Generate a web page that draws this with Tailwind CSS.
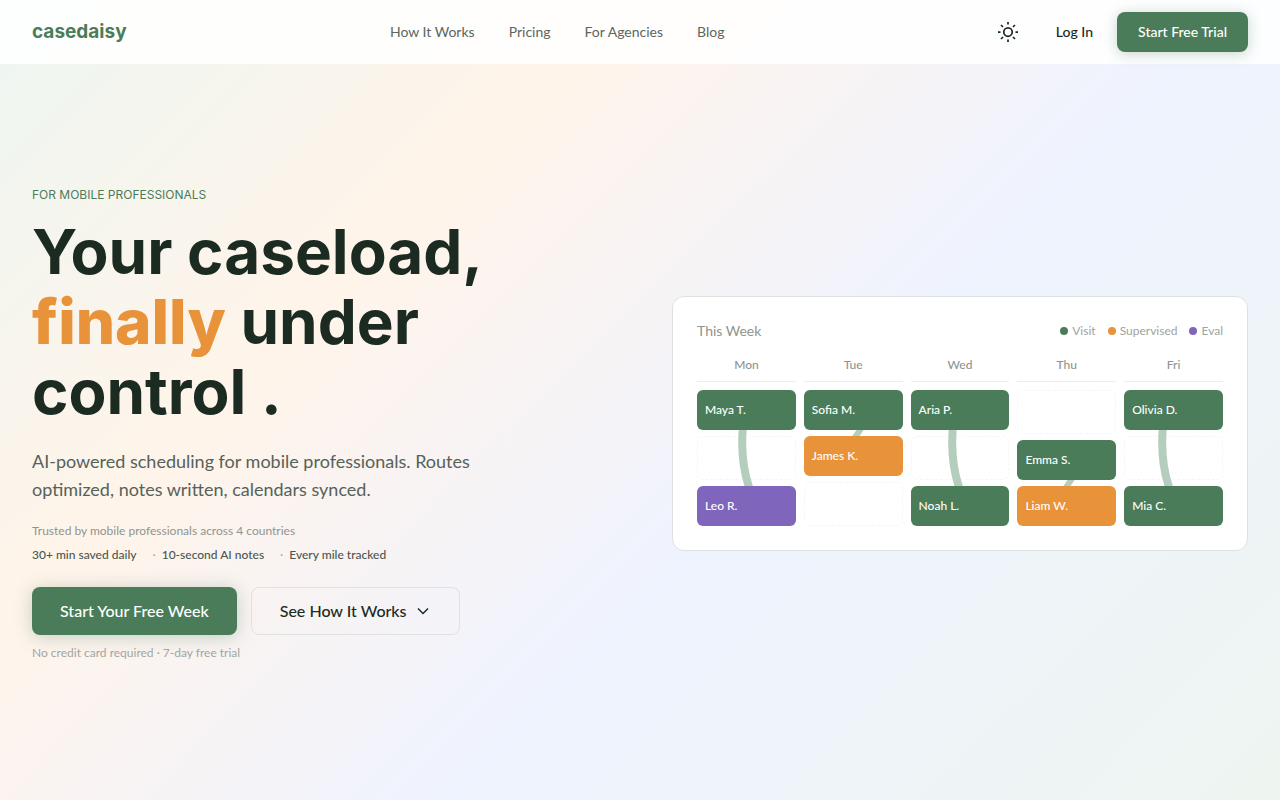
<!DOCTYPE html>
<html lang="en">
<head>
<meta charset="utf-8">
<meta name="viewport" content="width=device-width, initial-scale=1">
<title>casedaisy</title>
<script src="https://cdn.jsdelivr.net/npm/@tailwindcss/browser@4"></script>
</head>
<body class="flex min-h-screen flex-col bg-[linear-gradient(135deg,#edf6f1_0%,#fff4ea_30%,#eff3ff_60%,#eef5f0_100%)] font-['Lato','Inter',sans-serif] text-[#1c2b22]">

<header class="flex h-16 items-center justify-between bg-white/90 px-8">
  <a href="#" class="font-['Inter',sans-serif] text-[19px] font-bold text-[#4a7c59]">casedaisy</a>
  <nav class="flex gap-[34px] text-sm text-[#5a665e]">
    <a href="#how">How It Works</a>
    <a href="#pricing">Pricing</a>
    <a href="#agencies">For Agencies</a>
    <a href="#blog">Blog</a>
  </nav>
  <div class="flex items-center gap-6 text-sm font-medium">
    <button type="button" aria-label="Toggle theme" class="mr-1 flex size-10 items-center justify-center">
      <svg class="size-6" viewBox="0 0 24 24" fill="none" stroke="#1c2b22" stroke-width="1.75"><circle cx="12" cy="12" r="4.25"/><path d="M12 2v2.500M12 19.500v2.500M2 12h2.500M19.500 12h2.500M5 5l2 2M17 17l2 2M5 19l2-2M17 7l2-2"/></svg>
    </button>
    <a href="#login">Log In</a>
    <a href="#trial" class="flex h-10 items-center rounded-lg bg-[#4a7c59] px-[21px] text-white shadow-[0_2px_14px_rgba(74,124,89,0.3)]">Start Free Trial</a>
  </div>
</header>

<main class="grid flex-1 grid-cols-2 items-center gap-16 px-8 pb-[18px]">
  <section>
    <p class="font-['Inter',sans-serif] text-xs leading-5 text-[#4a7c59]">FOR MOBILE PROFESSIONALS</p>
    <h1 class="mt-3 font-['Inter',sans-serif] text-[62px] leading-[70px] font-bold">Your caseload,<br><span class="font-extrabold text-[#e8923a]">finally</span> under<br>control .</h1>
    <p class="mt-5 text-lg leading-7 text-[#566259]">AI-powered scheduling for mobile professionals. Routes<br>optimized, notes written, calendars synced.</p>
    <p class="mt-5 text-xs leading-4 text-[#8f958f]">Trusted by mobile professionals across 4 countries</p>
    <ul class="mt-2 flex gap-4 text-xs leading-4 font-medium text-[#4c574f]">
      <li>30+ min saved daily</li>
      <li><span class="mr-1.5 text-[#a5aaa5]">·</span>10-second AI notes</li>
      <li><span class="mr-1.5 text-[#a5aaa5]">·</span>Every mile tracked</li>
    </ul>
    <div class="mt-6 flex gap-3.5 text-base font-medium">
      <a href="#start" class="flex h-12 items-center rounded-lg bg-[#4a7c59] px-7 text-white shadow-[0_2px_18px_rgba(74,124,89,0.3)]">Start Your Free Week</a>
      <a href="#how" class="flex h-12 items-center gap-2 rounded-lg border border-[#dfe3e0] px-7">See How It Works
        <svg class="size-4" viewBox="0 0 16 16" fill="none" stroke="currentColor" stroke-width="1.5"><path d="m3 5.500 5 5 5-5"/></svg>
      </a>
    </div>
    <p class="mt-2.5 text-xs leading-4 text-[#a0a6a1]">No credit card required · 7-day free trial</p>
  </section>

  <section class="rounded-xl border border-[#dde2df] bg-white p-6">
    <div class="flex items-center justify-between leading-5">
      <h2 class="text-sm text-[#8f958f]">This Week</h2>
      <ul class="flex gap-3 text-xs text-[#9ea39e]">
        <li class="flex items-center gap-1"><span class="size-2 rounded-full bg-[#4a7c59]"></span>Visit</li>
        <li class="flex items-center gap-1"><span class="size-2 rounded-full bg-[#e8923a]"></span>Supervised</li>
        <li class="flex items-center gap-1"><span class="size-2 rounded-full bg-[#7f66bc]"></span>Eval</li>
      </ul>
    </div>
    <div class="mt-4 grid grid-cols-5 gap-2 text-xs leading-4 font-medium text-white">
      <div>
        <h3 class="mb-2 border-b border-[#eceeec] pb-2 text-center text-[#8f958f]">Mon</h3>
        <ul class="flex flex-col gap-1.5">
          <li class="flex h-10 items-center rounded-md bg-[#4a7c59] px-2">Maya T.</li>
          <li class="relative h-11 rounded-md border border-dashed border-[#f5f6f5]"><svg class="absolute -top-[7px] left-[37px] h-14 w-5" viewBox="0 0 20 56" fill="none" stroke="#b4cdbd" stroke-width="8"><path d="M8 -4C6 18 7 38 15 60"/></svg></li>
          <li class="flex h-10 items-center rounded-md bg-[#7f66bc] px-2">Leo R.</li>
        </ul>
      </div>
      <div>
        <h3 class="mb-2 border-b border-[#eceeec] pb-2 text-center text-[#8f958f]">Tue</h3>
        <ul class="flex flex-col gap-1.5">
          <li class="flex h-10 items-center rounded-md bg-[#4a7c59] px-2">Sofia M.</li>
          <li class="relative flex h-10 items-center rounded-md bg-[#e8923a] px-2"><svg class="absolute -top-1.5 left-11 h-1.5 w-5" viewBox="0 0 20 6" fill="none" stroke="#b4cdbd" stroke-width="6"><path d="M16 -6 4 12"/></svg>James K.</li>
          <li class="h-11 rounded-md border border-dashed border-[#f5f6f5]"></li>
        </ul>
      </div>
      <div>
        <h3 class="mb-2 border-b border-[#eceeec] pb-2 text-center text-[#8f958f]">Wed</h3>
        <ul class="flex flex-col gap-1.5">
          <li class="flex h-10 items-center rounded-md bg-[#4a7c59] px-2">Aria P.</li>
          <li class="relative h-11 rounded-md border border-dashed border-[#f5f6f5]"><svg class="absolute -top-[7px] left-[33px] h-14 w-5" viewBox="0 0 20 56" fill="none" stroke="#b4cdbd" stroke-width="8"><path d="M8 -4C6 18 7 38 15 60"/></svg></li>
          <li class="flex h-10 items-center rounded-md bg-[#4a7c59] px-2">Noah L.</li>
        </ul>
      </div>
      <div>
        <h3 class="mb-2 border-b border-[#eceeec] pb-2 text-center text-[#8f958f]">Thu</h3>
        <ul class="flex flex-col gap-1.5">
          <li class="h-11 rounded-md border border-dashed border-[#f5f6f5]"></li>
          <li class="flex h-10 items-center rounded-md bg-[#4a7c59] px-2">Emma S.</li>
          <li class="relative flex h-10 items-center rounded-md bg-[#e8923a] px-2"><svg class="absolute -top-1.5 left-[42px] h-1.5 w-5" viewBox="0 0 20 6" fill="none" stroke="#b4cdbd" stroke-width="6"><path d="M16 -6 4 12"/></svg>Liam W.</li>
        </ul>
      </div>
      <div>
        <h3 class="mb-2 border-b border-[#eceeec] pb-2 text-center text-[#8f958f]">Fri</h3>
        <ul class="flex flex-col gap-1.5">
          <li class="flex h-10 items-center rounded-md bg-[#4a7c59] px-2">Olivia D.</li>
          <li class="relative h-11 rounded-md border border-dashed border-[#f5f6f5]"><svg class="absolute -top-[7px] left-[30px] h-14 w-5" viewBox="0 0 20 56" fill="none" stroke="#b4cdbd" stroke-width="8"><path d="M8 -4C6 18 7 38 15 60"/></svg></li>
          <li class="flex h-10 items-center rounded-md bg-[#4a7c59] px-2">Mia C.</li>
        </ul>
      </div>
    </div>
  </section>
</main>
</body>
</html>
